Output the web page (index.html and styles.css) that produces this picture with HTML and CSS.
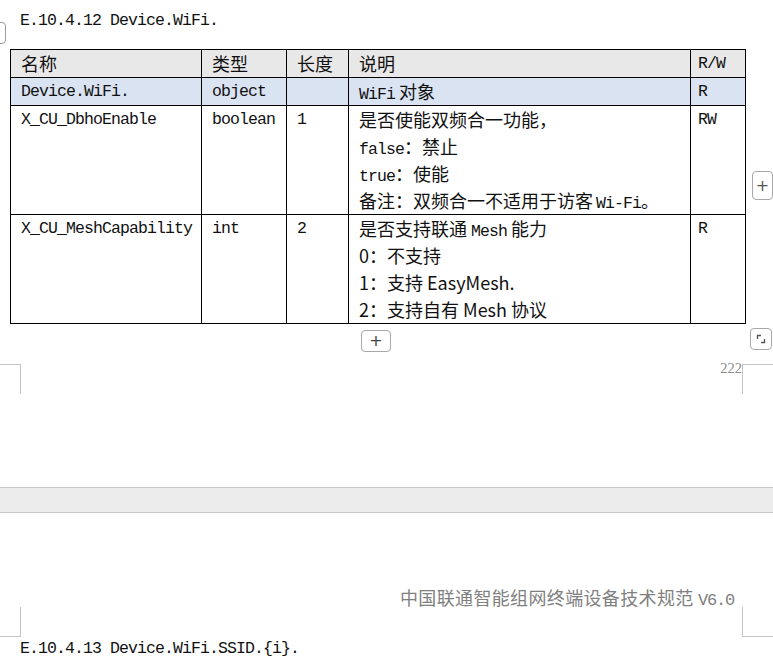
FILE: index.html
```html
<!DOCTYPE html>
<html lang="zh">
<head>
<meta charset="utf-8">
<title>Device.WiFi.</title>
<link rel="stylesheet" href="styles.css">
</head>
<body>
<div class="page page-one">
  <div class="move-handle"></div>
  <div class="heading">E.10.4.12 Device.WiFi.</div>
  <table class="params">
    <colgroup>
      <col class="c-name"><col class="c-type"><col class="c-len"><col class="c-desc"><col class="c-rw">
    </colgroup>
    <tr class="head">
      <td>名称</td><td>类型</td><td>长度</td><td>说明</td><td class="rw m">R/W</td>
    </tr>
    <tr class="obj">
      <td class="m">Device.WiFi.</td><td class="m">object</td><td class="m"></td><td><span class="m">WiFi</span> 对象</td><td class="rw m">R</td>
    </tr>
    <tr class="tall">
      <td class="m">X_CU_DbhoEnable</td><td class="m">boolean</td><td class="m">1</td>
      <td>是否使能双频合一功能，<br><span class="m">false</span>：禁止<br><span class="m">true</span>：使能<br>备注：双频合一不适用于访客<span class="m gap">Wi-Fi</span>。</td>
      <td class="rw m">RW</td>
    </tr>
    <tr class="tall">
      <td class="m">X_CU_MeshCapability</td><td class="m">int</td><td class="m">2</td>
      <td>是否支持联通 <span class="m">Mesh</span> 能力<br>0：不支持<br>1：支持 EasyMesh.<br>2：支持自有 Mesh 协议</td>
      <td class="rw m">R</td>
    </tr>
  </table>
  <div class="side-add">+</div>
  <div class="tools">
    <div class="add-btn">+</div>
    <div class="resize-btn">
      <svg width="22" height="22" viewBox="0 0 22 22"><path d="M7.5 11 V7.5 H11" fill="none" stroke="#555" stroke-width="1.3"/><path d="M11 14.5 H14.5 V11" fill="none" stroke="#555" stroke-width="1.3"/></svg>
    </div>
  </div>
  <div class="marks">
    <div class="mark mark-left-top"></div>
    <div class="pageno">222</div>
    <div class="mark mark-right-top"></div>
  </div>
</div>
<div class="gap-bar"></div>
<div class="page page-two">
  <div class="footer-title">中国联通智能组网终端设备技术规范 <span class="m">V6.0</span></div>
  <div class="marks marks-bottom">
    <div class="mark mark-left-bottom"></div>
    <div class="spacer"></div>
    <div class="mark mark-right-bottom"></div>
  </div>
  <div class="heading heading-two">E.10.4.13 Device.WiFi.SSID.{i}.</div>
</div>
</body>
</html>
```
FILE: styles.css
```css
html, body {
  margin: 0;
  padding: 0;
  background: #fff;
}
body {
  width: 773px;
  overflow: hidden;
  font-family: "Noto Sans CJK SC", "Noto Sans", sans-serif;
  font-size: 18px;
  color: #111;
}
.m {
  font-family: "Liberation Mono", "Noto Sans CJK SC", monospace;
  font-size: 16.5px;
  letter-spacing: -0.9px;
}
span.m { line-height: 1; }
.gap { margin-left: 3px; }

.page {
  position: relative;
  background: #fff;
}
.page-one {
  height: 487px;
}
.move-handle {
  position: absolute;
  left: -16px;
  top: 22px;
  width: 20px;
  height: 20px;
  border: 1px solid #9a9a9a;
  border-radius: 4px;
}
.heading {
  font-family: "Liberation Mono", monospace;
  font-size: 16.5px;
  letter-spacing: -0.9px;
  line-height: 20px;
  height: 20px;
  padding-left: 20px;
  color: #111;
}
.page-one .heading {
  padding-top: 11px;
}
.params {
  margin: 18px 0 0 10px;
  border-collapse: collapse;
  table-layout: fixed;
  width: 735px;
}
.c-name { width: 191px; }
.c-type { width: 85px; }
.c-len { width: 62px; }
.c-desc { width: 342px; }
.c-rw { width: 55px; }
.params td {
  border: 1px solid #000;
  padding: 0 4px 0 10px;
  vertical-align: top;
  line-height: 27px;
  height: 27px;
  white-space: nowrap;
}
.params td.rw { padding-left: 7px; }
.params tr.head td { background: #e8e8e8; }
.params tr.obj td { background: #dae3f2; }
.params tr.tall td { height: 107px; }
.params tr.tall td > span.m { vertical-align: baseline; }

.side-add {
  position: absolute;
  left: 752px;
  top: 171px;
  width: 19px;
  height: 27px;
  border: 1px solid #a8a8a8;
  border-radius: 4px;
  font-family: "DejaVu Sans", sans-serif;
  font-size: 16px;
  line-height: 27px;
  text-align: center;
  color: #555;
  background: #fff;
}
.tools {
  display: flex;
  align-items: flex-start;
  height: 24px;
  margin-top: 4px;
  padding-left: 361px;
  padding-right: 1px;
}
.add-btn {
  margin-top: 2px;
  width: 28px;
  height: 20px;
  border: 1px solid #a8a8a8;
  border-radius: 4px;
  font-family: "DejaVu Sans", sans-serif;
  font-size: 16px;
  line-height: 20px;
  text-align: center;
  color: #444;
}
.resize-btn {
  margin-left: auto;
  width: 20px;
  height: 20px;
  border: 1px solid #a8a8a8;
  border-radius: 4px;
  display: flex;
  align-items: center;
  justify-content: center;
}
.resize-btn svg { display: block; margin: -1px; }

.marks {
  display: flex;
  align-items: flex-start;
  margin-top: 12px;
}
.mark {
  height: 30px;
  border-color: #c4c4c4;
  border-style: solid;
  border-width: 0;
  box-sizing: border-box;
}
.mark-left-top {
  width: 21px;
  border-top-width: 1px;
  border-right-width: 1px;
}
.mark-right-top {
  width: 31px;
  border-top-width: 1px;
  border-left-width: 1px;
}
.pageno {
  flex: 1;
  text-align: right;
  font-family: "Liberation Serif", serif;
  font-size: 14.5px;
  line-height: 14px;
  margin-top: -3px;
  color: #8a8a8a;
}

.gap-bar {
  height: 24px;
  background: #ececec;
  border-top: 1px solid #c8c8c8;
  border-bottom: 1px solid #c8c8c8;
}

.page-two {
  height: 155px;
}
.footer-title {
  padding-top: 71px;
  padding-right: 39px;
  text-align: right;
  line-height: 27px;
  color: #808080;
  letter-spacing: 0.35px;
}
.footer-title .m {
  color: #808080;
  font-size: 17px;
  letter-spacing: -1.2px;
}
.marks-bottom {
  margin-top: -4px;
}
.spacer { flex: 1; }
.mark-left-bottom {
  width: 21px;
  border-bottom-width: 1px;
  border-right-width: 1px;
}
.mark-right-bottom {
  width: 31px;
  border-bottom-width: 1px;
  border-left-width: 1px;
}
.heading-two {
  margin-top: 2px;
}
```
